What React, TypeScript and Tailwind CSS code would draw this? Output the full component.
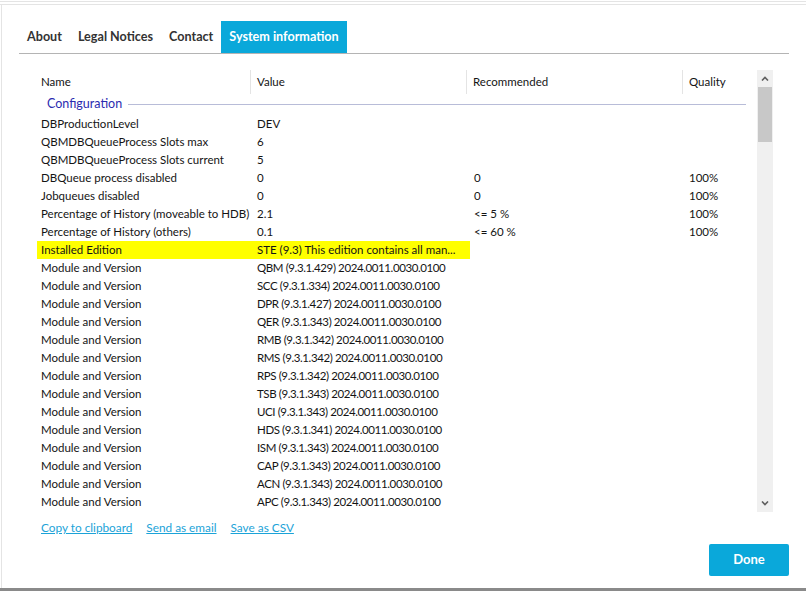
import React from 'react';

type Row = { name: string; value: string; rec?: string; quality?: string; highlight?: boolean; numeric?: boolean };

const configRows: Row[] = [
    { name: "DBProductionLevel", value: "DEV" },
    { name: "QBMDBQueueProcess Slots max", value: "6" },
    { name: "QBMDBQueueProcess Slots current", value: "5" },
    { name: "DBQueue process disabled", value: "0", rec: "0", quality: "100%" },
    { name: "Jobqueues disabled", value: "0", rec: "0", quality: "100%" },
    { name: "Percentage of History (moveable to HDB)", value: "2.1", rec: "<= 5 %", quality: "100%" },
    { name: "Percentage of History (others)", value: "0.1", rec: "<= 60 %", quality: "100%" },
    { name: "Installed Edition", value: "STE (9.3) This edition contains all man...", highlight: true },
];

const modules = [
    "QBM (9.3.1.429)", "SCC (9.3.1.334)", "DPR (9.3.1.427)", "QER (9.3.1.343)",
    "RMB (9.3.1.342)", "RMS (9.3.1.342)", "RPS (9.3.1.342)", "TSB (9.3.1.343)",
    "UCI (9.3.1.343)", "HDS (9.3.1.341)", "ISM (9.3.1.343)", "CAP (9.3.1.343)",
    "ACN (9.3.1.343)", "APC (9.3.1.343)",
];

const rows: Row[] = [
    ...configRows,
    ...modules.map((m) => ({ name: "Module and Version", value: `${m} 2024.0011.0030.0100`, numeric: true })),
];

const tabs = ["About", "Legal Notices", "Contact", "System information"];

export default function App() {
    return (
        <div className="w-[806px] h-[591px] bg-white flex flex-col font-['Lato',sans-serif] text-[#141414] overflow-hidden">
            <div className="h-[4px] border-t border-b border-[#e4e4e4] mt-[1px] shrink-0" />
            <div className="flex-1 flex flex-col border-l border-[#e4e4e4] ml-[1px] pl-[17px] pr-[17px] pt-[16px]">
                {/* tabs */}
                <div className="flex border-b border-[#b4b4b4] h-[33px]">
                    {tabs.map((t, i) => (
                        <div
                            key={t}
                            className={`px-2 flex items-center text-[12.6px] font-bold ${i === 3 ? 'bg-[#0aa8da] text-white' : 'text-[#333]'}`}
                        >
                            {t}
                        </div>
                    ))}
                </div>

                {/* list */}
                <div className="flex mt-[16px] ml-[18px] h-[442px] text-[11.5px]">
                    <div className="w-[713px] flex flex-col">
                        <div className="flex h-[24px] items-center">
                            <div className="w-[213px] pl-1">Name</div>
                            <div className="w-[216px] h-full flex items-center pl-[6px] border-l border-[#e4e4e4]">Value</div>
                            <div className="w-[216px] h-full flex items-center pl-[6px] border-l border-[#e4e4e4]">Recommended</div>
                            <div className="flex-1 h-full flex items-center pl-[6px] border-l border-[#e4e4e4]">Quality</div>
                        </div>
                        <div className="h-[21px] flex items-center pl-[10px] pr-[4px] gap-[6px]">
                            <span className="text-[#2b2bb0] text-[12.5px]">Configuration</span>
                            <div className="flex-1 h-px bg-[#b8bcd8]" />
                        </div>
                        {rows.map((r, i) => (
                            <div key={i} className="flex h-[18px] items-center">
                                <div className={`flex ${r.highlight ? 'bg-[#ffff00]' : ''} w-[433px] h-full items-center`}>
                                    <div className="w-[213px] pl-1 whitespace-nowrap">{r.name}</div>
                                    <div className={`w-[216px] pl-[7px] whitespace-nowrap ${r.numeric ? 'tracking-[-0.4px]' : ''}`}>{r.value}</div>
                                </div>
                                <div className="w-[215px] pl-[4px] whitespace-nowrap">{r.rec}</div>
                                <div className="flex-1 pl-[4px]">{r.quality}</div>
                            </div>
                        ))}
                    </div>
                    <div className="ml-[7px] w-[16px] bg-[#f0f0f0] flex flex-col">
                        <div className="h-[17px] flex items-center justify-center">
                            <svg width="8" height="5" viewBox="0 0 8 5"><path d="M1 4.5 L4 1.5 L7 4.5" stroke="#606060" strokeWidth="1.6" fill="none" /></svg>
                        </div>
                        <div className="h-[55px] bg-[#c8c8c8] mx-px" />
                        <div className="flex-1" />
                        <div className="h-[17px] flex items-center justify-center">
                            <svg width="8" height="5" viewBox="0 0 8 5"><path d="M1 0.5 L4 3.5 L7 0.5" stroke="#606060" strokeWidth="1.6" fill="none" /></svg>
                        </div>
                    </div>
                </div>

                <div className="flex gap-[14px] ml-[22px] mt-[7px] text-[11.8px] text-[#1ba3d8] underline">
                    <span>Copy to clipboard</span>
                    <span>Send as email</span>
                    <span>Save as CSV</span>
                </div>

                <div className="flex justify-end mt-[7px]">
                    <button className="w-[80px] h-[32px] bg-[#0aa8da] text-white text-[13px] font-bold rounded-[2px]">Done</button>
                </div>
            </div>
            <div className="h-[3px] bg-[#8a8a8a] shrink-0" />
        </div>
    );
}
